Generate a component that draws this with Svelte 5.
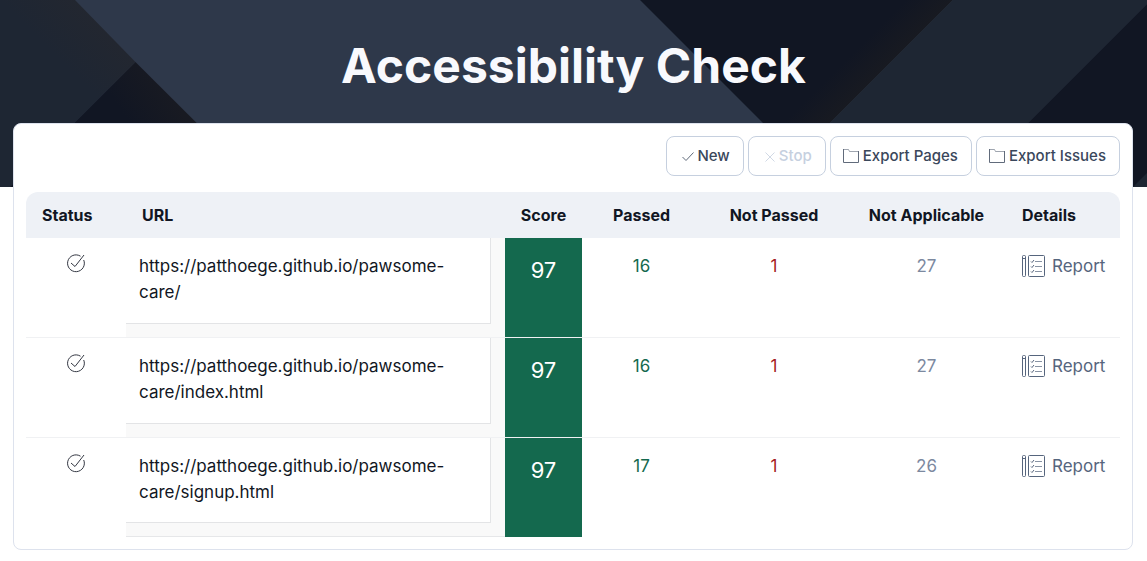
<script>
  const rows = [
    { url: 'https://patthoege.github.io/pawsome-care/', score: 97, passed: 16, failed: 1, skipped: 27 },
    { url: 'https://patthoege.github.io/pawsome-care/index.html', score: 97, passed: 16, failed: 1, skipped: 27 },
    { url: 'https://patthoege.github.io/pawsome-care/signup.html', score: 97, passed: 17, failed: 1, skipped: 26 },
  ];
</script>

{#snippet folder()}
  <svg width="16" height="16" viewBox="0 0 16 16" fill="none" stroke="currentColor" aria-hidden="true">
    <path d="M.5 1.500H5.500L6.500 3.500H15.500" opacity=".6" />
    <path d="M.5 1V14.500H15.500V3" />
  </svg>
{/snippet}

<div class="page">
  <header>
    <svg class="backdrop" viewBox="0 0 1147 187" preserveAspectRatio="none" aria-hidden="true">
      <defs>
        <linearGradient id="slate" gradientUnits="userSpaceOnUse" x1="54" y1="54" x2="105" y2="3">
          <stop offset="0" stop-color="#1e2633" />
          <stop offset="1" stop-color="#24272f" />
        </linearGradient>
        <linearGradient id="nightLeft" gradientUnits="userSpaceOnUse" x1="130" y1="123" x2="170" y2="95">
          <stop offset="0" stop-color="#111623" />
          <stop offset="1" stop-color="#181a22" />
        </linearGradient>
        <linearGradient id="nightMid" gradientUnits="userSpaceOnUse" x1="868" y1="38" x2="892" y2="62">
          <stop offset="0" stop-color="#111623" />
          <stop offset="1" stop-color="#181a21" />
        </linearGradient>
      </defs>
      <rect width="1147" height="187" fill="#2e384a" />
      <path d="M0 0H75L135.500 62L10 187H0Z" fill="url(#slate)" />
      <path d="M135.500 62L261 187H10Z" fill="url(#nightLeft)" />
      <path d="M640 0H953L766 187H827Z" fill="url(#nightMid)" />
      <path d="M953 0H1147V4L964 187H766Z" fill="#1e2633" />
      <path d="M1147 4V187H964Z" fill="#111623" />
      <path d="M1147 173V187H1133Z" fill="#1e2633" />
    </svg>
    <h1>Accessibility Check</h1>
  </header>

  <main>
    <div class="toolbar">
      <button type="button" class="small">
        <svg width="14" height="14" viewBox="0 0 14 14" fill="none" stroke="currentColor" aria-hidden="true">
          <path d="M1.500 8L5 11.500L12.500 3.500" />
        </svg>New
      </button>
      <button type="button" class="small" disabled>
        <svg width="14" height="14" viewBox="0 0 14 14" fill="none" stroke="currentColor" aria-hidden="true">
          <path d="M2.500 3.500L11.500 12.500M11.500 3.500L2.500 12.500" />
        </svg>Stop
      </button>
      <button type="button">{@render folder()}Export Pages</button>
      <button type="button">{@render folder()}Export Issues</button>
    </div>

    <table>
      <colgroup>
        <col class="c-status" /><col /><col class="c-score" /><col class="c-passed" />
        <col class="c-failed" /><col class="c-skipped" /><col class="c-details" />
      </colgroup>
      <thead>
        <tr>
          <th class="start">Status</th>
          <th class="start">URL</th>
          <th>Score</th>
          <th>Passed</th>
          <th>Not Passed</th>
          <th>Not Applicable</th>
          <th class="start">Details</th>
        </tr>
      </thead>
      <tbody>
        {#each rows as row}
          <tr>
            <td class="status">
              <svg width="20" height="20" viewBox="0 0 20 20" fill="none" stroke="currentColor" role="img" aria-label="Done">
                <path d="M14.500 3.200A8.400 8.400 0 1 0 17.700 7" />
                <path d="M5 10L9 13.500L18 2" />
              </svg>
            </td>
            <td class="url"><div>{row.url}</div></td>
            <td class="score">{row.score}</td>
            <td class="passed">{row.passed}</td>
            <td class="failed">{row.failed}</td>
            <td class="skipped">{row.skipped}</td>
            <td class="details">
              <a href="#report">
                <svg width="24" height="24" viewBox="0 0 24 24" fill="none" stroke="currentColor" aria-hidden="true">
                  <rect x="6.500" y="1.500" width="16" height="21" rx="1" />
                  <rect x=".5" y="1.500" width="3" height="21" rx="1" />
                  <path d="M.5 4.500H3.500" />
                  <path d="M13 7.500H20M13 12.500H20M13 17.500H20" opacity=".7" />
                  <path d="M9 7.500L10 8.500L12 6M9 12.500L10 13.500L12 11M9 17.500L10 18.500L12 16" />
                </svg>Report
              </a>
            </td>
          </tr>
        {/each}
      </tbody>
    </table>
  </main>
</div>

<style>
  :global(body) {
    margin: 0;
    background: #fff;
  }
  .page {
    font-family: Inter, "Open Sans", sans-serif;
    font-size: 17px;
    line-height: 26px;
    color: #111623;
    padding-bottom: 11px;
  }
  header {
    position: relative;
    height: 187px;
    margin-bottom: -64px;
  }
  .backdrop {
    position: absolute;
    inset: 0;
    width: 100%;
    height: 100%;
  }
  h1 {
    position: relative;
    margin: 0;
    padding-top: 34px;
    text-align: center;
    font-size: 48px;
    line-height: 64px;
    font-weight: 700;
    color: #f8f9fd;
  }
  main {
    position: relative;
    margin: 0 14px 0 13px;
    padding: 12px;
    background: #fff;
    border: 1px solid #dde2ed;
    border-radius: 8px;
  }
  .toolbar {
    display: flex;
    justify-content: flex-end;
    gap: 4px;
    margin-bottom: 16px;
  }
  button {
    display: flex;
    align-items: center;
    gap: 4px;
    height: 40px;
    padding: 0 13px 0 12px;
    border: 1px solid #c6d0df;
    border-radius: 8px;
    background: #fff;
    color: #3a475b;
    font: 500 15px/24px Inter, "Open Sans", sans-serif;
  }
  button svg {
    opacity: 0.8;
  }
  .small {
    gap: 2px;
    padding: 0 13px 0 14px;
  }
  button:disabled {
    color: #c6d0df;
  }
  table {
    width: 100%;
    table-layout: fixed;
    border-collapse: separate;
    border-spacing: 0;
  }
  .c-status { width: 100px; }
  .c-score { width: 77px; }
  .c-passed { width: 119px; }
  .c-failed { width: 146px; }
  .c-skipped { width: 159px; }
  .c-details { width: 114px; }
  th {
    height: 46px;
    padding: 0;
    background: #eef1f6;
    font-size: 16px;
    font-weight: 700;
    text-align: center;
    white-space: nowrap;
  }
  th.start {
    padding-left: 16px;
    text-align: left;
  }
  th:first-child { border-top-left-radius: 12px; }
  th:last-child { border-top-right-radius: 12px; }
  td {
    box-sizing: border-box;
    height: 100px;
    padding: 15px 0 0;
    border-bottom: 1px solid #f0f1f3;
    vertical-align: top;
    text-align: center;
  }
  tr:last-child td {
    height: 99px;
    border-bottom-color: #fff;
  }
  td.url {
    padding: 0 14px 13px 0;
    background: #f9f9f9;
    text-align: left;
  }
  .url div {
    box-sizing: border-box;
    height: 86px;
    padding: 15px 13px;
    background: #fff;
    border: solid #e3e4e6;
    border-width: 0 1px 1px 0;
  }
  tr:last-child td.url { border-bottom-color: #e6e7e9; }
  tr:last-child .url div { height: 85px; }
  td.score {
    padding-top: 18px;
    background: #14694e;
    background-clip: padding-box;
    color: #fff;
    font-size: 22px;
    line-height: 28px;
  }
  tr:last-child td.score { border-bottom-color: #14694e; }
  .passed { color: #14694e; }
  .failed { color: #a51d24; }
  .skipped { color: #7c899f; }
  .status svg {
    display: block;
    margin: 0 auto;
    opacity: 0.85;
  }
  a {
    display: flex;
    align-items: center;
    gap: 6px;
    padding-left: 16px;
    color: #56657d;
    text-decoration: none;
  }
</style>
